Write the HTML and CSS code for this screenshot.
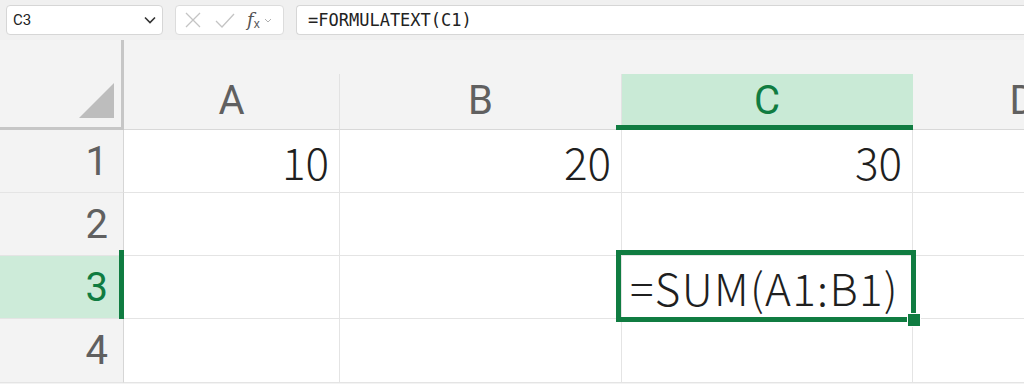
FILE: index.html
```html
<!DOCTYPE html>
<html>
<head>
  <meta charset="UTF-8">
  <title>Sheet</title>
  <link rel="stylesheet" href="styles.css">
</head>
<body>
  <div class="toolbar">
    <div class="name-box">
      <span class="name-text">C3</span>
      <svg class="chevron" width="12" height="8" viewBox="0 0 12 8"><polyline points="1,1.5 6,6.5 11,1.5" fill="none" stroke="#333" stroke-width="1.6"/></svg>
    </div>
    <div class="fx-box">
      <svg class="fx-icon" width="16" height="16" viewBox="0 0 16 16"><path d="M1 1 L15 15 M15 1 L1 15" stroke="#c4c4c4" stroke-width="1.3" fill="none"/></svg>
      <svg class="fx-icon" width="20" height="15" viewBox="0 0 20 15"><polyline points="1,8 7,14 19,1" stroke="#c4c4c4" stroke-width="1.3" fill="none"/></svg>
      <span class="fx-label"><i>f</i><sub>x</sub></span>
      <svg class="small-chevron" width="8" height="5" viewBox="0 0 8 5"><polyline points="1,1 4,4 7,1" fill="none" stroke="#b0b0b0" stroke-width="1"/></svg>
    </div>
    <div class="formula-input">=FORMULATEXT(C1)</div>
  </div>

  <div class="sheet">
    <div class="corner"><div class="corner-tri"></div></div>
    <div class="spacer"></div>
    <div class="spacer"></div>
    <div class="spacer"></div>
    <div class="spacer"></div>

    <div class="col-head">A</div>
    <div class="col-head">B</div>
    <div class="col-head selected">C</div>
    <div class="col-head">D</div>

    <div class="row-head">1</div>
    <div class="cell num">10</div>
    <div class="cell num">20</div>
    <div class="cell num">30</div>
    <div class="cell"></div>

    <div class="row-head">2</div>
    <div class="cell"></div>
    <div class="cell"></div>
    <div class="cell"></div>
    <div class="cell"></div>

    <div class="row-head selected">3</div>
    <div class="cell"></div>
    <div class="cell"></div>
    <div class="cell active">=SUM(A1:B1)</div>
    <div class="cell"></div>

    <div class="row-head">4</div>
    <div class="cell"></div>
    <div class="cell"></div>
    <div class="cell"></div>
    <div class="cell"></div>
  </div>
</body>
</html>
```

FILE: styles.css
```css
* {
  box-sizing: border-box;
  margin: 0;
  padding: 0;
}

html, body {
  width: 1024px;
  height: 384px;
  overflow: hidden;
}

body {
  background: #f3f3f3;
  font-family: Roboto, "Liberation Sans", sans-serif;
}

.toolbar {
  height: 40px;
  display: flex;
  align-items: center;
  gap: 12px;
  padding: 0 0 0 6px;
  background: #f0f0f0;
}

.name-box {
  width: 157px;
  height: 30px;
  background: white;
  border: 1px solid #d6d6d6;
  border-radius: 4px;
  display: flex;
  align-items: center;
  justify-content: space-between;
  padding: 0 6px 0 6px;
}

.name-text {
  font-size: 15px;
  color: #222;
}

.fx-box {
  width: 109px;
  height: 30px;
  background: white;
  border: 1px solid #dcdcdc;
  border-radius: 4px;
  display: flex;
  align-items: center;
  padding: 0 0 0 9px;
  gap: 14px;
}

.fx-label {
  font-family: "DejaVu Serif", serif;
  font-size: 18px;
  color: #555;
  margin-left: -2px;
}

.fx-label sub {
  font-family: "Liberation Sans", sans-serif;
  font-size: 12px;
  vertical-align: -2px;
}

.small-chevron {
  margin-left: -10px;
}

.formula-input {
  flex: 1;
  height: 30px;
  background: white;
  border: 1px solid #d6d6d6;
  border-right: none;
  border-radius: 4px 0 0 4px;
  display: flex;
  align-items: center;
  padding-left: 11px;
  font-family: "DejaVu Sans Mono", "Liberation Mono", monospace;
  font-size: 17px;
  color: #222;
}

.sheet {
  display: grid;
  grid-template-columns: 124px 216px 282px 291px 220px;
  grid-template-rows: 34px 56px 63px 63px 63px 64px;
  width: 1133px;
}

.corner {
  grid-row: 1 / 3;
  background: #f3f3f3;
  border-right: 3px solid #c6c6c6;
  border-bottom: 3px solid #c6c6c6;
  display: flex;
  justify-content: flex-end;
  align-items: flex-end;
  padding: 0 7px 9px 0;
}

.corner-tri {
  width: 35px;
  height: 35px;
  background: #bdbdbd;
  clip-path: polygon(100% 0, 100% 100%, 0 100%);
}

.spacer {
  background: #f3f3f3;
}

.col-head {
  position: relative;
  background: #f3f3f3;
  border-right: 1px solid #e2e2e2;
  border-bottom: 1px solid #d8d8d8;
  display: flex;
  align-items: center;
  justify-content: center;
  font-size: 40px;
  color: #606060;
  padding-bottom: 2px;
}

.col-head.selected {
  background: #c9ead6;
  color: #107c41;
  border-right-color: #c9ead6;
}

.col-head.selected::after {
  content: '';
  position: absolute;
  left: -6px;
  right: -4px;
  bottom: -1px;
  height: 5px;
  background: #107c41;
}

.row-head {
  position: relative;
  background: #f3f3f3;
  border-right: 1px solid #d6d6d6;
  border-bottom: 1px solid #e4e4e4;
  display: flex;
  align-items: center;
  justify-content: flex-end;
  padding-right: 15px;
  font-size: 40px;
  color: #606060;
}

.row-head.selected {
  background: #cdebd9;
  color: #107c41;
}

.row-head.selected::after {
  content: '';
  position: absolute;
  right: -1px;
  top: -6px;
  bottom: -5px;
  width: 5px;
  background: #107c41;
}

.cell {
  position: relative;
  background: white;
  border-right: 1px solid #e4e4e4;
  border-bottom: 1px solid #e4e4e4;
  display: flex;
  align-items: center;
  padding: 0 8px;
  font-family: "Noto Sans CJK JP", "Liberation Sans", sans-serif;
  font-weight: 300;
  font-size: 44px;
  color: #1f1f1f;
  white-space: nowrap;
}

.cell.num {
  justify-content: flex-end;
  padding-right: 10px;
}

.cell.active {
  letter-spacing: 1.3px;
}

.cell.active::before {
  content: '';
  position: absolute;
  top: -6px;
  left: -6px;
  right: -4px;
  bottom: -4px;
  border: 5px solid #107c41;
  z-index: 2;
}

.cell.active::after {
  content: '';
  position: absolute;
  right: -9px;
  bottom: -9px;
  width: 12px;
  height: 12px;
  background: #107c41;
  border: 1px solid white;
  z-index: 3;
}
```
